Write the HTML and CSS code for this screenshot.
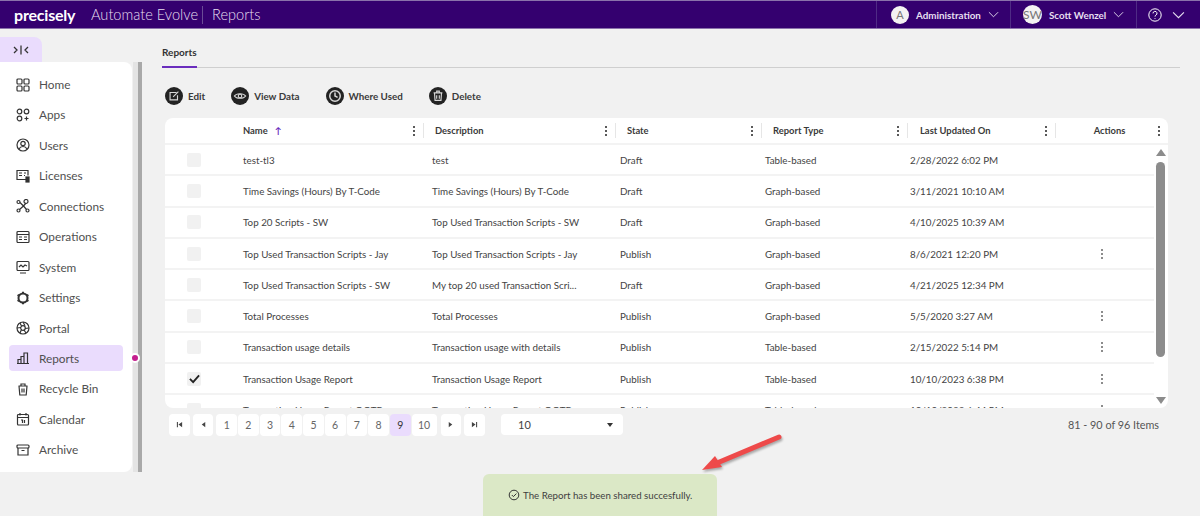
FILE: index.html
```html
<!DOCTYPE html>
<html lang="en">
<head>
<meta charset="utf-8">
<title>Reports</title>
<link rel="stylesheet" href="styles.css">
</head>
<body>
<header class="topbar">
  <div class="brand">
    <span class="logo">precisely</span>
    <span class="product">Automate Evolve</span>
    <span class="page-name">Reports</span>
  </div>
  <div class="top-actions">
    <div class="top-item admin"><span class="avatar">A</span><span class="top-label">Administration</span><svg class="chev" viewBox="0 0 12 7"><path d="M1 1l5 5 5-5"/></svg></div>
    <div class="top-item user"><span class="avatar">SW</span><span class="top-label">Scott Wenzel</span><svg class="chev" viewBox="0 0 12 7"><path d="M1 1l5 5 5-5"/></svg></div>
    <div class="top-item help"><svg class="help-ic" viewBox="0 0 14 14"><circle cx="7" cy="7" r="6.2"/><path d="M5 5.4a2 2 0 1 1 3 1.7c-.7.4-1 .8-1 1.5"/><path d="M7 10v.8"/></svg><svg class="chev" viewBox="0 0 12 7"><path d="M1 1l5 5 5-5"/></svg></div>
  </div>
</header>
<div class="shell">
  <aside class="side">
    <button class="toggle"><svg viewBox="0 0 18 10"><path d="M2 2l3 3-3 3M9 .5v9M16 2l-3 3 3 3"/></svg></button>
    <div class="side-body">
      <nav class="nav">
        <a class="nav-item"><svg viewBox="0 0 14 14"><rect x="1" y="1" width="5" height="5" rx="1"/><rect x="8" y="1" width="5" height="5" rx="1"/><rect x="1" y="8" width="5" height="5" rx="1"/><rect x="8" y="8" width="5" height="5" rx="1"/></svg>Home</a>
        <a class="nav-item"><svg viewBox="0 0 14 14"><circle cx="3.500" cy="3.500" r="2.300"/><circle cx="10.500" cy="3.500" r="2.300"/><circle cx="3.500" cy="10.500" r="2.300"/><path d="M10.500 8.500v4M8.500 10.500h4"/></svg>Apps</a>
        <a class="nav-item"><svg viewBox="0 0 14 14"><circle cx="7" cy="7" r="6"/><circle cx="7" cy="5.500" r="2.200"/><path d="M3 11c1-2 2.500-2.500 4-2.500s3 .5 4 2.500"/></svg>Users</a>
        <a class="nav-item"><svg viewBox="0 0 14 14"><path d="M10 10.500H1V1.500h11v5"/><path d="M3 4h3M3 6.500h3M8 4h2M8 6.500h1"/><rect class="solid" x="10" y="8" width="3" height="5"/></svg>Licenses</a>
        <a class="nav-item"><svg viewBox="0 0 14 14"><circle cx="2.500" cy="3" r="1.500"/><circle cx="10" cy="2.500" r="2"/><circle cx="2.500" cy="11.500" r="1.500"/><circle cx="11.500" cy="11.500" r="1.500"/><path d="M4 3.500l3.500 3.500 2.500-3M7.500 7l-4 3.500M7.500 7l3 3.500"/></svg>Connections</a>
        <a class="nav-item"><svg viewBox="0 0 14 14"><rect x="1" y="1.500" width="12" height="11" rx="1"/><path d="M1 4.500h12M3 7h3M3 9.500h3M8 7h3M8 9.500h3"/></svg>Operations</a>
        <a class="nav-item"><svg viewBox="0 0 14 14"><rect x="1" y="1.500" width="12" height="9" rx="1"/><path d="M3 7l2-2 2 2 2-2 2 1M4 13h6"/></svg>System</a>
        <a class="nav-item"><svg viewBox="0 0 14 14"><circle class="thick" cx="7" cy="7" r="4.500"/><path class="thick" d="M7 .8v1.400M7 11.800v1.400M1.600 3.900l1.200.7M11.200 9.400l1.200.7M1.600 10.100l1.200-.7M11.200 4.600l1.200-.7"/></svg>Settings</a>
        <a class="nav-item"><svg viewBox="0 0 14 14"><circle cx="7" cy="7" r="6"/><circle cx="7" cy="7" r="2.300"/><path d="M7 1l2 3.800M13 7l-4 .5M10 12l-2-3M4 12l1.500-3.500M1 7l4-.5M4 2l1.500 3"/></svg>Portal</a>
        <a class="nav-item active"><svg viewBox="0 0 14 14"><path d="M1 12.500h12M2 12.500v-4h3v4M5 12.500v-7h3v7M8 12.500V2h3.500v10.500"/></svg>Reports</a>
        <a class="nav-item"><svg viewBox="0 0 14 14"><path d="M2.500 4h9M3 4l.8 9h6.400l.8-9M5 2h4v2H5zM6 6.500v4M8 6.500v4"/></svg>Recycle Bin</a>
        <a class="nav-item"><svg viewBox="0 0 14 14"><rect x="1.500" y="2.500" width="11" height="10.500" rx="1"/><path d="M1.500 5.500h11M4 1v2.500M10 1v2.500M5 8h1.500v3M8.500 8v3"/></svg>Calendar</a>
        <a class="nav-item"><svg viewBox="0 0 14 14"><rect x="1" y="2" width="12" height="3" rx="1"/><path d="M2 5v7h10V5M5.500 7.500h3"/></svg>Archive</a>
      </nav>
      <div class="side-rail"><span class="rail-dot"></span></div>
    </div>
  </aside>
  <main class="main">
    <div class="tabs"><span class="tab">Reports</span></div>
    <div class="toolbar">
      <span class="tool"><span class="tool-ic"><svg viewBox="0 0 16 16"><path d="M11 4H3.500v8.500H12V7"/><path d="M7 9l6-6"/></svg></span>Edit</span>
      <span class="tool"><span class="tool-ic"><svg viewBox="0 0 16 16"><path d="M1.500 8C4 4.500 12 4.500 14.500 8 12 11.500 4 11.500 1.500 8z"/><circle cx="8" cy="8" r="2"/></svg></span>View Data</span>
      <span class="tool"><span class="tool-ic"><svg viewBox="0 0 16 16"><circle class="thick" cx="8" cy="8" r="6"/><path class="thick" d="M8 4v4l3 1.500"/></svg></span>Where Used</span>
      <span class="tool"><span class="tool-ic"><svg viewBox="0 0 16 16"><path d="M3 4.500h10M4 4.500l.6 8.500h6.800l.6-8.500M6.500 2.500h3v2h-3zM6.500 7v4M9.500 7v4"/></svg></span>Delete</span>
    </div>
    <section class="grid">
      <div class="grid-head">
        <div class="hc hc-check"></div>
        <div class="hc hc-name">Name<span class="sort">↑</span><span class="kebab"></span></div>
        <div class="hc hc-desc">Description<span class="kebab"></span></div>
        <div class="hc hc-state">State<span class="kebab"></span></div>
        <div class="hc hc-type">Report Type<span class="kebab"></span></div>
        <div class="hc hc-date">Last Updated On<span class="kebab"></span></div>
        <div class="hc hc-act"><span class="act-title">Actions</span><span class="kebab"></span></div>
      </div>
      <div class="grid-body">
        <div class="rows">
          <div class="row"><span class="cb"></span><span>test-tl3</span><span>test</span><span>Draft</span><span>Table-based</span><span>2/28/2022 6:02 PM</span><span></span></div>
          <div class="row"><span class="cb"></span><span>Time Savings (Hours) By T-Code</span><span>Time Savings (Hours) By T-Code</span><span>Draft</span><span>Graph-based</span><span>3/11/2021 10:10 AM</span><span></span></div>
          <div class="row"><span class="cb"></span><span>Top 20 Scripts - SW</span><span>Top Used Transaction Scripts - SW</span><span>Draft</span><span>Graph-based</span><span>4/10/2025 10:39 AM</span><span></span></div>
          <div class="row"><span class="cb"></span><span>Top Used Transaction Scripts - Jay</span><span>Top Used Transaction Scripts - Jay</span><span>Publish</span><span>Graph-based</span><span>8/6/2021 12:20 PM</span><span class="more"></span></div>
          <div class="row"><span class="cb"></span><span>Top Used Transaction Scripts - SW</span><span>My top 20 used Transaction Scri...</span><span>Draft</span><span>Graph-based</span><span>4/21/2025 12:34 PM</span><span></span></div>
          <div class="row"><span class="cb"></span><span>Total Processes</span><span>Total Processes</span><span>Publish</span><span>Graph-based</span><span>5/5/2020 3:27 AM</span><span class="more"></span></div>
          <div class="row"><span class="cb"></span><span>Transaction usage details</span><span>Transaction usage with details</span><span>Publish</span><span>Table-based</span><span>2/15/2022 5:14 PM</span><span class="more"></span></div>
          <div class="row"><span class="cb checked"><svg viewBox="0 0 14 12"><path d="M2 6.500l3.500 3.500L12 2.500"/></svg></span><span>Transaction Usage Report</span><span>Transaction Usage Report</span><span>Publish</span><span>Table-based</span><span>10/10/2023 6:38 PM</span><span class="more"></span></div>
          <div class="row"><span class="cb"></span><span>Transaction Usage Report OOTB</span><span>Transaction Usage Report OOTB</span><span>Publish</span><span>Table-based</span><span>10/10/2023 6:44 PM</span><span class="more"></span></div>
        </div>
        <div class="vscroll"><span class="arrow-up"></span><span class="thumb"></span><span class="arrow-down"></span></div>
      </div>
    </section>
    <div class="pager">
      <div class="pages">
        <span class="pg"><svg class="pg-svg" viewBox="0 0 8 8"><path d="M1 1h1.200v6H1zM7 1v6L2.800 4z"/></svg></span>
        <span class="pg gap-r"><svg class="pg-svg" viewBox="0 0 8 8"><path d="M6 1v6L2 4z"/></svg></span>
        <span class="pg">1</span><span class="pg">2</span><span class="pg">3</span><span class="pg">4</span><span class="pg">5</span><span class="pg">6</span><span class="pg">7</span><span class="pg">8</span><span class="pg current">9</span><span class="pg wide">10</span>
        <span class="pg gap-r"><svg class="pg-svg" viewBox="0 0 8 8"><path d="M2 1v6l4-3z"/></svg></span>
        <span class="pg"><svg class="pg-svg" viewBox="0 0 8 8"><path d="M7 1H5.800v6H7zM1 1v6l4.200-3z"/></svg></span>
      </div>
      <div class="size-select"><span>10</span><span class="caret"></span></div>
      <div class="count">81 - 90 of 96 Items</div>
    </div>
  </main>
</div>
<div class="toast"><svg viewBox="0 0 12 12"><circle cx="6" cy="6" r="4.800"/><path d="M3.800 6l1.600 1.600 3-3"/></svg>The Report has been shared succesfully.</div>
<svg class="callout" viewBox="0 0 95 50"><path class="callout-head" d="M7 40L20 26l7 11z"/><path class="callout-shaft" d="M22 33L84 7"/></svg>
</body>
</html>
```
FILE: styles.css
```css
* { box-sizing: border-box; }
html, body { margin: 0; height: 516px; overflow: hidden; }
body { background: #f1f1f1; color: #444; font-family: Lato, "Liberation Sans", sans-serif; font-size: 11px; position: relative; }

.topbar { height: 29px; background: #34006f; border-top: 1px solid #8a72ab; border-bottom: 1px solid #8a72ab; display: flex; justify-content: space-between; align-items: center; color: #e6dff0; }
.brand { display: flex; align-items: center; padding-left: 14px; }
.logo { color: #fff; font-size: 16px; font-weight: 700; width: 77px; letter-spacing: -.2px; }
.product { font-size: 14.600px; font-weight: 300; width: 111px; white-space: nowrap; }
.page-name { font-size: 14.600px; font-weight: 300; border-left: 1px solid #6a4b96; padding-left: 9px; height: 18px; line-height: 18px; }
.top-actions { display: flex; height: 100%; }
.top-item { display: flex; align-items: center; border-left: 1px solid #4f2b85; height: 100%; }
.admin { width: 134px; padding-left: 14px; }
.user { width: 126px; padding-left: 12px; }
.help { width: 64px; padding-left: 11px; }
.avatar { width: 18px; height: 18px; border-radius: 50%; background: #f4f2f2; color: #777; display: flex; align-items: center; justify-content: center; font-size: 11px; margin-right: 7px; flex: none; }
.user .avatar { width: 19px; height: 19px; font-size: 12px; }
.top-label { font-size: 9.800px; font-weight: 700; white-space: nowrap; }
.chev { width: 11px; height: 7px; margin-left: 7px; fill: none; stroke: #e6dff0; stroke-width: 1; }
.help-ic { width: 14px; height: 14px; fill: none; stroke: #fff; stroke-width: 1; }
.help .chev { width: 13px; height: 8px; margin-left: 10px; }

.shell { display: flex; align-items: flex-start; }
.side { width: 162px; flex: none; }
.toggle { display: flex; width: 42px; height: 25px; margin-top: 8px; padding: 0 0 0 12px; border: 0; background: #eadcfd; border-radius: 0 8px 0 0; align-items: center; }
.toggle svg { width: 18px; height: 10px; fill: none; stroke: #333; stroke-width: 1.300; }
.side-body { display: flex; height: 410px; }
.nav { width: 132px; height: 100%; background: #fff; border-radius: 0 8px 8px 0; padding: 9.500px 9px 0 9px; }
.nav-item { height: 26px; margin-bottom: 4.450px; border-radius: 4px; display: flex; align-items: center; padding-left: 7px; font-size: 11.800px; color: #505050; }
.nav-item svg { width: 14px; height: 14px; margin-right: 9px; flex: none; fill: none; stroke: #333; stroke-width: 1.200; }
.nav-item svg .solid { fill: #333; }
.nav-item svg .thick { stroke-width: 2; }
.active { background: #eadcfd; }
.side-rail { width: 9px; height: 100%; margin-left: 1px; background: #e4e4e4; border-right: 4px solid #a9a9a9; position: relative; }
.rail-dot { position: absolute; left: -3px; top: 291px; width: 10px; height: 10px; border-radius: 50%; background: #c41e8e; border: 2px solid #fff; }

.main { flex: 1; padding-right: 20px; }
.tabs { height: 39px; border-bottom: 1px solid #cfcfcf; display: flex; align-items: flex-end; }
.tab { height: 38px; width: 35px; font-size: 10px; font-weight: 700; color: #333; border-bottom: 2px solid #6a2dbd; margin-bottom: -1px; padding-top: 16px; white-space: nowrap; }
.toolbar { display: flex; padding: 19px 0 0 3px; height: 50px; }
.tool { display: flex; align-items: center; height: 18px; font-size: 9.800px; font-weight: 700; color: #3a3a3a; margin-right: 26px; white-space: nowrap; }
.tool-ic { width: 18px; height: 18px; border-radius: 50%; background: #232323; margin-right: 5px; display: flex; align-items: center; justify-content: center; }
.tool-ic svg { width: 14px; height: 14px; fill: none; stroke: #d8d8d8; stroke-width: 1.300; }
.tool-ic svg .thick { stroke-width: 1.700; }

.grid { width: 1003px; height: 290px; margin-left: 3px; background: #fff; border-radius: 8px; overflow: hidden; }
.grid-head { height: 27px; display: grid; grid-template-columns: 78px 180px 192px 146px 146px 148px 113px; border-bottom: 2px solid #f3f3f3; }
.hc { display: flex; align-items: center; position: relative; font-size: 9.400px; font-weight: 700; color: #3a3a3a; padding-right: 8.500px; }
.hc-desc, .hc-state, .hc-type, .hc-date, .hc-act { padding-left: 12px; }
.hc-date { padding-left: 13px; }
.hc-desc::before, .hc-state::before, .hc-type::before, .hc-date::before, .hc-act::before { content: ""; position: absolute; left: 0; top: 5px; bottom: 5px; width: 1px; background: #e6e6e6; }
.sort { color: #6a2dbd; margin-left: 7px; font-size: 9px; }
.kebab { margin-left: auto; width: 2px; height: 2px; border-radius: 50%; background: #222; box-shadow: 0 -4px 0 #222, 0 4px 0 #222; }
.act-title { flex: 1; text-align: center; padding-right: 6px; }
.hc-act { padding-right: 6px; }
.hc-act .kebab { margin-left: 0; margin-right: 2px; }

.grid-body { display: flex; height: 263px; overflow: hidden; }
.rows { width: 989px; flex: none; }
.row { height: 31.300px; display: grid; grid-template-columns: 78px 189px 188px 145px 145px 145px 99px; align-items: center; border-bottom: 2px solid #f3f3f3; font-size: 9.800px; color: #444; white-space: nowrap; }
.cb { width: 14px; height: 14px; margin-left: 22px; background: #f1f1f1; border-radius: 2px; display: flex; align-items: center; justify-content: center; }
.checked svg { width: 13px; height: 11px; fill: none; stroke: #222; stroke-width: 2; }
.more { justify-self: center; margin-right: 5px; width: 2px; height: 2px; border-radius: 50%; background: #666; box-shadow: 0 -4px 0 #666, 0 4px 0 #666; }
.vscroll { flex: 1; display: flex; flex-direction: column; align-items: center; padding: 4px 1px 0 0; }
.arrow-up { width: 0; height: 0; border: 5px solid transparent; border-top: 0; border-bottom: 7px solid #8c8c8c; }
.thumb { width: 9px; height: 195px; margin-top: 6px; background: #8c8c8c; border-radius: 5px; }
.arrow-down { width: 0; height: 0; margin-top: 40px; border: 5px solid transparent; border-bottom: 0; border-top: 7px solid #8c8c8c; }

.pager { display: flex; align-items: center; margin-left: 7px; margin-top: 5px; height: 23px; }
.pages { display: flex; gap: 1px; width: 332px; }
.pg { width: 20.700px; height: 22px; background: #fff; border-radius: 4px; display: flex; align-items: center; justify-content: center; font-size: 10.500px; color: #666; }
.pg-svg { width: 7px; height: 7px; fill: #444; }
.gap-r { margin-right: 2px; }
.pg:first-child { margin-right: 2px; }
.current { background: #eadcfd; color: #333; }
.wide { width: 25px; margin-right: 3px; }
.size-select { width: 122px; height: 21px; background: #fff; border-radius: 4px; display: flex; align-items: center; justify-content: space-between; padding: 0 10px 0 17px; font-size: 11px; color: #444; }
.caret { width: 0; height: 0; border: 3px solid transparent; border-bottom: 0; border-top: 4px solid #333; }
.count { margin-left: auto; margin-right: 21px; font-size: 10.800px; color: #555; }

.toast { position: absolute; left: 483px; top: 474px; width: 234px; height: 42px; background: #dbe8c6; border-radius: 6px 6px 0 0; display: flex; align-items: center; padding: 0 0 0 25px; font-size: 9.700px; color: #3f3f3f; white-space: nowrap; }
.toast svg { width: 12px; height: 12px; margin-right: 3px; fill: none; stroke: #333; stroke-width: 1; }
.callout { position: absolute; left: 695px; top: 430px; width: 95px; height: 50px; filter: drop-shadow(1px 2px 1px rgba(0,0,0,.3)); }
.callout-head { fill: #ee4a4a; }
.callout-shaft { fill: none; stroke: #ee4a4a; stroke-width: 5; stroke-linecap: round; }
```
